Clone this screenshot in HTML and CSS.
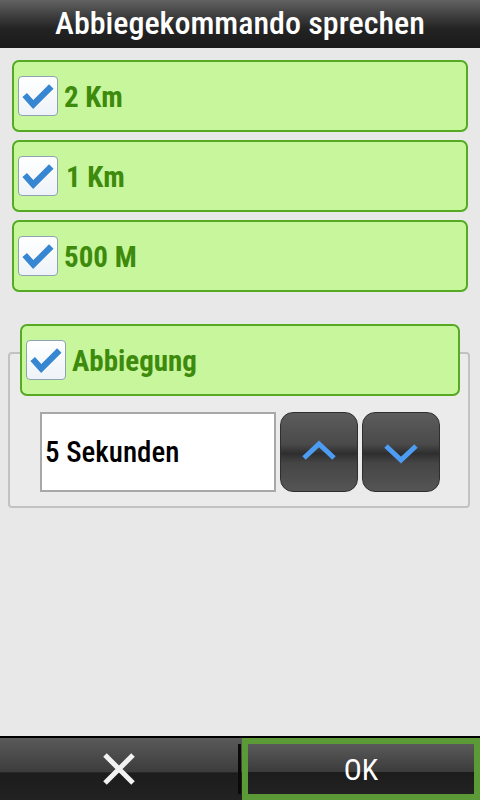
FILE: index.html
```html
<!DOCTYPE html>
<html>
<head>
<meta charset="utf-8">
<link rel="stylesheet" href="styles.css">
</head>
<body>
<div class="page">
  <header class="titlebar">Abbiegekommando sprechen</header>
  <main class="content">
    <div class="options">
      <div class="row"><span class="cb"><svg viewBox="0 0 40 40" width="40" height="40"><polyline points="6,19 15,29 34,10" class="chk"/></svg></span><span class="label">2 Km</span></div>
      <div class="row"><span class="cb"><svg viewBox="0 0 40 40" width="40" height="40"><polyline points="6,19 15,29 34,10" class="chk"/></svg></span><span class="label l2">1 Km</span></div>
      <div class="row"><span class="cb"><svg viewBox="0 0 40 40" width="40" height="40"><polyline points="6,19 15,29 34,10" class="chk"/></svg></span><span class="label">500 M</span></div>
    </div>
    <section class="group">
      <div class="row head"><span class="cb"><svg viewBox="0 0 40 40" width="40" height="40"><polyline points="6,19 15,29 34,10" class="chk"/></svg></span><span class="label">Abbiegung</span></div>
      <div class="spin">
        <div class="field">5 Sekunden</div>
        <button class="sbtn"><svg viewBox="0 0 40 40" width="40" height="40"><polyline points="5,26 20,12 35,26" class="chev"/></svg></button>
        <button class="sbtn"><svg viewBox="0 0 40 40" width="40" height="40"><polyline points="5,14 20,28 35,14" class="chev"/></svg></button>
      </div>
    </section>
  </main>
  <footer class="bottombar">
    <button class="bbtn cancel"><svg viewBox="0 0 40 40" width="40" height="40"><path d="M6 6 L34 34 M34 6 L6 34" class="x"/></svg></button>
    <div class="divider"></div>
    <button class="bbtn ok"><span>OK</span></button>
  </footer>
</div>
</body>
</html>
```
FILE: styles.css
```css
html, body {
  margin: 0;
  padding: 0;
}
body {
  background: #e8e8e8;
  font-family: "Roboto Condensed", "Liberation Sans", sans-serif;
}
.page {
  width: 480px;
  height: 800px;
  display: flex;
  flex-direction: column;
}
.titlebar {
  height: 48px;
  background: linear-gradient(#626262 0%, #3c3c3c 35%, #232323 60%, #1a1a1a 100%);
  color: #fff;
  font-size: 32px;
  font-weight: 500;
  line-height: 46px;
  text-align: center;
  flex: none;
}
.content {
  flex: 1;
  padding: 12px 0 0 0;
}
.options {
  display: flex;
  flex-direction: column;
  gap: 8px;
  padding: 0 12px;
}
.row {
  height: 72px;
  box-sizing: border-box;
  border: 2px solid #55aa22;
  border-radius: 7px;
  background: #c8f69c;
  display: flex;
  align-items: center;
  padding-left: 4px;
}
.cb {
  width: 40px;
  height: 40px;
  box-sizing: border-box;
  border: 1px solid #8fa3b3;
  border-radius: 4px;
  background: linear-gradient(#ffffff, #eef3f8);
  display: flex;
  align-items: center;
  justify-content: center;
  flex: none;
}
.cb svg {
  display: block;
}
.chk {
  fill: none;
  stroke: #3686d2;
  stroke-width: 6.5;
  stroke-linejoin: miter;
  stroke-linecap: butt;
}
.label {
  color: #3d8a0c;
  font-size: 29px;
  font-weight: bold;
  margin-left: 6px;
  padding-top: 2px;
}
.label.l2 {
  margin-left: 8px;
}
.group {
  margin: 60px 10px 0 8px;
  border: 2px solid #c2c2c2;
  border-radius: 4px;
  padding: 0 0 14px 0;
  background: #ebebeb;
}
.row.head {
  margin: -30px 8px 0 10px;
}
.spin {
  display: flex;
  gap: 4px;
  margin: 16px 0 0 30px;
}
.field {
  width: 236px;
  height: 80px;
  box-sizing: border-box;
  border: 2px solid #a8a8a8;
  background: #fff;
  color: #000;
  font-size: 29px;
  font-weight: 500;
  display: flex;
  align-items: center;
  padding-left: 3px;
}
.sbtn {
  width: 78px;
  height: 80px;
  border: 1px solid #2e2e2e;
  border-radius: 13px;
  background: linear-gradient(#5c5c5c 0%, #4a4a4a 40%, #2e2e2e 52%, #454545 64%, #555 100%);
  display: flex;
  align-items: center;
  justify-content: center;
  padding: 0;
}
.chev {
  fill: none;
  stroke: #4b9cf2;
  stroke-width: 5;
}
.bottombar {
  flex: none;
  height: 64px;
  box-sizing: border-box;
  border-top: 2px solid #000;
  display: flex;
  background: linear-gradient(#5a5a5a 0%, #3c3c3c 55%, #1c1c1c 56%, #222 100%);
}
.bbtn {
  border: none;
  padding: 0;
  margin: 0;
  background: linear-gradient(#5a5a5a 0%, #3c3c3c 55%, #1c1c1c 56%, #222 100%);
  display: flex;
  align-items: center;
  justify-content: center;
}
.cancel {
  width: 238px;
}
.x {
  stroke: #f2f2f2;
  stroke-width: 5;
  fill: none;
}
.divider {
  width: 3px;
  margin: 6px 0 6px 0;
  background: #0a0a0a;
}
.ok {
  flex: 1;
  margin-left: 1px;
  border: 6px solid #5b9a36;
  color: #fff;
  font-family: inherit;
  font-size: 30px;
  font-weight: 400;
}
```
